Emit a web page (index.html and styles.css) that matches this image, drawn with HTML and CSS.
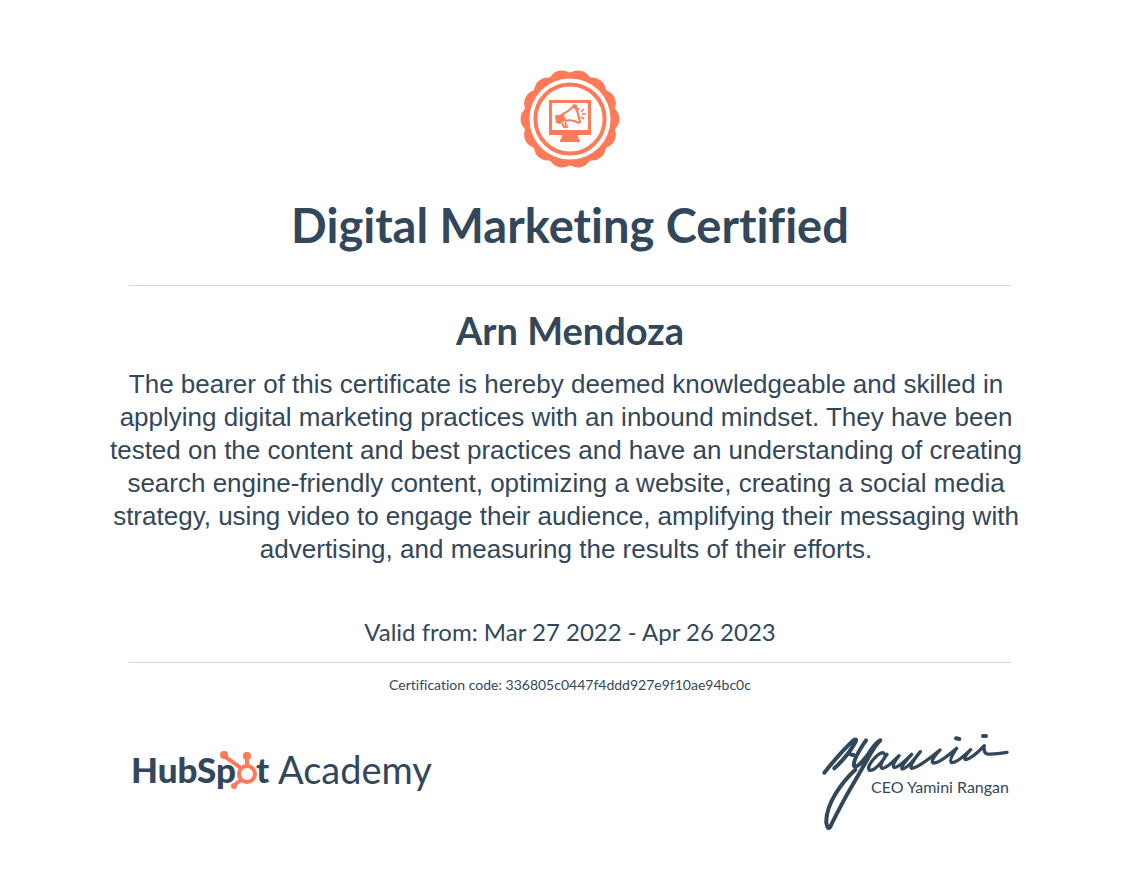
FILE: index.html
```html
<!DOCTYPE html>
<html lang="en">
<head>
<meta charset="utf-8">
<meta name="viewport" content="width=device-width, initial-scale=1">
<title>Digital Marketing Certified</title>
<link rel="stylesheet" href="styles.css">
</head>
<body>
<main class="certificate">
  <svg class="seal" viewBox="-50 -50 100 100" role="img" aria-label="Digital marketing badge">
    <defs><circle id="lobe" cx="36" cy="0" r="13.4"/></defs>
    <g class="coral">
      <circle r="46.4"/>
      <use href="#lobe"/>
      <use href="#lobe" transform="rotate(25.714)"/>
      <use href="#lobe" transform="rotate(51.429)"/>
      <use href="#lobe" transform="rotate(77.143)"/>
      <use href="#lobe" transform="rotate(102.857)"/>
      <use href="#lobe" transform="rotate(128.571)"/>
      <use href="#lobe" transform="rotate(154.286)"/>
      <use href="#lobe" transform="rotate(180)"/>
      <use href="#lobe" transform="rotate(205.714)"/>
      <use href="#lobe" transform="rotate(231.429)"/>
      <use href="#lobe" transform="rotate(257.143)"/>
      <use href="#lobe" transform="rotate(282.857)"/>
      <use href="#lobe" transform="rotate(308.571)"/>
      <use href="#lobe" transform="rotate(334.286)"/>
    </g>
    <circle class="paper" r="40.6"/>
    <circle class="ring" r="34.6"/>
    <path class="coral" fill-rule="evenodd" d="M-21-19H21V16H8Q8 20 10 21V23H-10V21Q-8 20-8 16H-21ZM-18-16V11H18V-16Z"/>
    <path class="coral" d="M-15-4Q-11-3-7-6L-4 1Q-8 3-10 5L-14 4Z"/>
    <path class="horn" d="M-7-5Q1-9 4-14L6-13 10 3 9 4Q2 0-5 2M4-13Q9-6 10 3M-8 4L-6 8-3 8-5 3"/>
    <path class="sound" d="M9-11L8-9M14-10L11-7M16-5L12-5M14 0L11-2"/>
  </svg>
  <h1 class="title">Digital Marketing Certified</h1>
  <section class="award">
    <h2 class="holder">Arn Mendoza</h2>
    <p class="statement">The bearer of this certificate is hereby deemed knowledgeable and skilled in applying digital marketing practices with an inbound mindset. They have been tested on the content and best practices and have an understanding of creating search engine-friendly content, optimizing a website, creating a social media strategy, using video to engage their audience, amplifying their messaging with advertising, and measuring the results of their efforts.</p>
    <p class="validity">Valid from: Mar 27 2022 - Apr 26 2023</p>
  </section>
  <p class="code">Certification code: 336805c0447f4ddd927e9f10ae94bc0c</p>
  <footer class="footer">
    <svg class="logo" viewBox="0 0 304 50" role="img" aria-label="HubSpot Academy">
      <text class="brand" x="2" y="38">HubSp</text>
      <text class="brand" x="127" y="38">t</text>
      <circle class="paper" cx="118" cy="29" r="11"/>
      <g class="sprocket">
        <circle cx="118" cy="29" r="8"/>
        <path d="M95 11L112 23M118 12V21M112 35L104 41"/>
      </g>
      <g class="coral"><circle cx="95" cy="10" r="4"/><circle cx="118" cy="11" r="4"/><circle cx="105" cy="41" r="3"/></g>
      <text class="academy" x="149" y="39">Academy</text>
    </svg>
    <div class="signature">
      <svg class="ink" viewBox="0 0 570 300" role="img" aria-label="Signature of Yamini Rangan">
        <path d="M10 119Q55 62 96 23Q110 14 103 28Q80 70 40 106M88 64L97 66"/>
        <path d="M135 22Q95 80 99 98Q106 110 140 66Q162 30 178 22Q168 30 150 60Q110 130 75 190Q45 245 28 281Q20 293 16 270Q14 230 45 180Q70 140 103 110"/>
        <path class="fine" d="M191 64Q183 50 158 78Q136 104 146 112Q165 114 198 64Q172 98 183 106Q195 108 234 68Q210 98 220 104Q232 104 272 64Q235 104 244 108Q258 108 298 56Q262 100 272 106Q290 106 357 51Q325 86 337 90Q355 92 407 46Q382 82 392 89Q408 90 449 50Q424 76 434 80Q452 78 490 38Q486 60 499 63Q525 64 558 58"/>
        <path d="M405 16L415 18M486 9L495 9"/>
      </svg>
      <p class="signer">CEO Yamini Rangan</p>
    </div>
  </footer>
</main>
</body>
</html>
```
FILE: styles.css
```css
* { box-sizing: border-box; }
body { margin: 0; background: #fff; color: #33475b; font-family: Lato, "Open Sans", sans-serif; font-variant-ligatures: none; }
.certificate { max-width: 900px; margin: 0 auto; padding: 69px 9px 48px; display: flex; flex-direction: column; align-items: stretch; text-align: center; }
.seal { width: 100px; height: 100px; align-self: center; }
.coral { fill: #ff7a59; }
.paper { fill: #fff; }
.ring { fill: none; stroke: #ff7a59; stroke-width: 4; }
.horn { fill: none; stroke: #ff7a59; stroke-width: 2; stroke-linejoin: round; }
.sound { fill: none; stroke: #ff7a59; stroke-width: 1.6; }
.title { margin: 27px 0 31px; font-size: 47px; line-height: 58px; font-weight: 700; }
.award { border: solid #cbd6e2; border-width: 1px 0; padding: 21px 0 13px; }
.holder { margin: 0; font-size: 38px; line-height: 46px; font-weight: 700; }
.statement { margin: 15px -13px 0 -21px; font-family: "Liberation Sans", Arial, sans-serif; font-size: 26px; line-height: 33px; }
.validity { margin: 49px 0 0; font-size: 24px; line-height: 34px; }
.code { margin: 12px 0 0; font-size: 14px; line-height: 20px; }
.footer { display: flex; justify-content: space-between; align-items: flex-start; margin-top: 38px; }
.logo { width: 304px; height: 50px; margin-top: 12px; }
.brand { font: 900 35px Lato, sans-serif; fill: #33475b; }
.academy { font: 400 38px Lato, sans-serif; fill: #33475b; }
.sprocket { fill: none; stroke: #ff7a59; stroke-width: 4; }
.signature { display: grid; }
.ink { grid-area: 1 / 1; width: 190px; height: 100px; fill: none; stroke: #33475b; stroke-width: 12; stroke-linecap: round; stroke-linejoin: round; }
.fine { stroke-width: 10; }
.signer { grid-area: 1 / 1; margin: 44px 2px 0 0; font-size: 16px; line-height: 20px; text-align: right; }
```
